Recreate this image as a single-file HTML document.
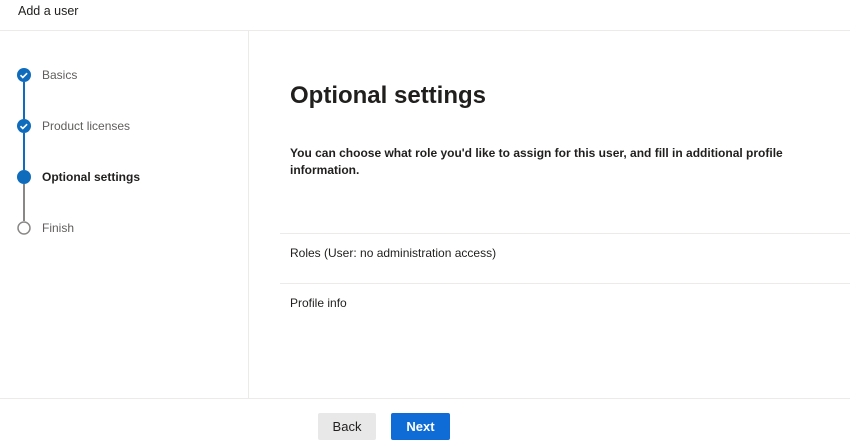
<html><head><style>
body{margin:0;width:850px;height:444px;background:#fff;font-family:"Liberation Sans",sans-serif;position:relative;overflow:hidden;color:#323130}
.a{position:absolute}
.t{font-size:12px;color:#605e5c}
</style></head><body>
<div class="a" style="left:18px;top:4px;font-size:12.5px;color:#201f1e">Add a user</div>
<div class="a" style="left:0;top:30px;width:850px;height:1px;background:#edebe9"></div>
<div class="a" style="left:248px;top:31px;width:1px;height:367px;background:#edebe9"></div>
<div class="a" style="left:0;top:398px;width:850px;height:1px;background:#edebe9"></div>
<svg class="a" style="left:0;top:0" width="248" height="398">
<line x1="24" y1="82" x2="24" y2="119" stroke="#0f6cbd" stroke-width="2"/>
<line x1="24" y1="133" x2="24" y2="170" stroke="#0f6cbd" stroke-width="2"/>
<line x1="24" y1="184" x2="24" y2="221" stroke="#8a8886" stroke-width="2"/>
<circle cx="24" cy="75" r="7" fill="#0f6cbd"/>
<path d="M20.5 75.2l2.3 2.3 4.3-4.3" stroke="#fff" stroke-width="1.6" fill="none"/>
<circle cx="24" cy="126" r="7" fill="#0f6cbd"/>
<path d="M20.5 126.2l2.3 2.3 4.3-4.3" stroke="#fff" stroke-width="1.6" fill="none"/>
<circle cx="24" cy="177" r="7" fill="#0f6cbd"/>
<circle cx="24" cy="228" r="6" fill="#fff" stroke="#8a8886" stroke-width="1.5"/>
</svg>
<div class="a t" style="left:42px;top:68px">Basics</div>
<div class="a t" style="left:42px;top:119px">Product licenses</div>
<div class="a" style="left:42px;top:170px;font-size:12px;font-weight:bold;color:#201f1e">Optional settings</div>
<div class="a t" style="left:42px;top:221px">Finish</div>
<div class="a" style="left:290px;top:82px;font-size:24px;font-weight:bold;color:#201f1e">Optional settings</div>
<div class="a" style="left:290px;top:145px;width:500px;font-size:12px;font-weight:bold;line-height:17px;color:#201f1e">You can choose what role you'd like to assign for this user, and fill in additional profile information.</div>
<div class="a" style="left:280px;top:233px;width:570px;height:1px;background:#edebe9"></div>
<div class="a" style="left:290px;top:246px;font-size:12px;color:#201f1e">Roles (User: no administration access)</div>
<div class="a" style="left:280px;top:283px;width:570px;height:1px;background:#edebe9"></div>
<div class="a" style="left:290px;top:296px;font-size:12px;color:#201f1e">Profile info</div>
<div class="a" style="left:318px;top:413px;width:58px;height:27px;background:#e8e8e8;border-radius:2px;font-size:13px;line-height:28px;text-align:center;color:#201f1e">Back</div>
<div class="a" style="left:391px;top:413px;width:59px;height:27px;background:#0f6cd6;border-radius:2px;font-size:13px;font-weight:bold;line-height:28px;text-align:center;color:#fff">Next</div>
</body></html>
